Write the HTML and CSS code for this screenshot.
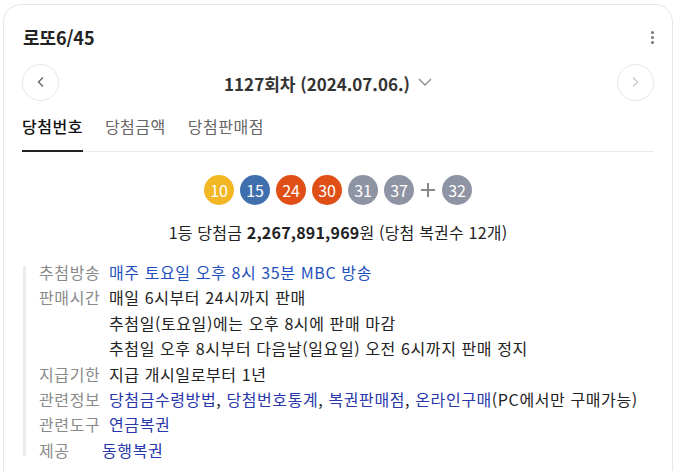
FILE: index.html
```html
<!DOCTYPE html>
<html lang="ko">
<head>
<meta charset="utf-8">
<title>로또6/45</title>
<link rel="stylesheet" href="styles.css">
</head>
<body>
<section class="card">
  <header class="head">
    <h2 class="title">로또6/45</h2>
    <button class="more" aria-label="더보기"><span></span><span></span><span></span></button>
  </header>
  <div class="nav">
    <button class="circle" aria-label="이전회차">
      <svg width="12" height="12" viewBox="0 0 12 12"><path d="M8 1.5 3.5 6 8 10.5" fill="none" stroke="#666" stroke-width="1.4"/></svg>
    </button>
    <div class="round">
      <span>1127회차 (2024.07.06.)</span>
      <svg class="chev" width="14" height="8" viewBox="0 0 14 8"><path d="M1 1 7 7 13 1" fill="none" stroke="#888" stroke-width="1.3"/></svg>
    </div>
    <button class="circle next" aria-label="다음회차">
      <svg width="12" height="12" viewBox="0 0 12 12"><path d="M4 1.5 8.5 6 4 10.5" fill="none" stroke="#ccc" stroke-width="1.4"/></svg>
    </button>
  </div>
  <nav class="tabs">
    <a class="tab on">당첨번호</a>
    <a class="tab">당첨금액</a>
    <a class="tab">당첨판매점</a>
  </nav>
  <div class="balls">
    <span class="ball y">10</span>
    <span class="ball b">15</span>
    <span class="ball r">24</span>
    <span class="ball r">30</span>
    <span class="ball g">31</span>
    <span class="ball g">37</span>
    <svg class="plus" width="16" height="16" viewBox="0 0 16 16"><path d="M8 1v14M1 8h14" stroke="#888" stroke-width="2"/></svg>
    <span class="ball g">32</span>
  </div>
  <p class="prize">1등 당첨금 <strong>2,267,891,969</strong>원 (당첨 복권수 12개)</p>
  <dl class="info">
    <div class="row"><dt>추첨방송</dt><dd class="blue">매주 토요일 오후 8시 35분 MBC 방송</dd></div>
    <div class="row"><dt>판매시간</dt><dd>매일 6시부터 24시까지 판매<br>추첨일(토요일)에는 오후 8시에 판매 마감<br>추첨일 오후 8시부터 다음날(일요일) 오전 6시까지 판매 정지</dd></div>
    <div class="row"><dt>지급기한</dt><dd>지급 개시일로부터 1년</dd></div>
    <div class="row"><dt>관련정보</dt><dd><a class="lnk">당첨금수령방법</a>, <a class="lnk">당첨번호통계</a>, <a class="lnk">복권판매점</a>, <a class="lnk">온라인구매</a>(PC에서만 구매가능)</dd></div>
    <div class="row"><dt>관련도구</dt><dd><a class="lnk">연금복권</a></dd></div>
    <div class="row"><dt class="short">제공</dt><dd><a class="lnk">동행복권</a></dd></div>
  </dl>
</section>
</body>
</html>
```
FILE: styles.css
```css
* { box-sizing: border-box; }
body {
  margin: 0;
  background: #fff;
  font-family: "Noto Sans CJK KR", "Noto Sans", sans-serif;
  color: #222;
  overflow: hidden;
}
.card {
  margin: 4px 6px 0 3px;
  min-height: 520px;
  border: 1px solid #e4e6ea;
  border-radius: 18px;
  padding: 20px 18px 0 18px;
}
.head {
  display: flex;
  align-items: center;
  justify-content: space-between;
  height: 24px;
}
.title {
  margin: 0 0 0 1px;
  font-size: 18px;
  font-weight: 700;
  line-height: 24px;
  letter-spacing: -0.1px;
}
.more {
  border: 0;
  background: none;
  padding: 0;
  width: 10px;
  margin-right: -3px;
  display: flex;
  flex-direction: column;
  align-items: center;
  gap: 2px;
}
.more span {
  width: 3px;
  height: 3px;
  border-radius: 50%;
  background: #777;
}
.nav {
  margin-top: 15px;
  display: flex;
  align-items: center;
  justify-content: space-between;
  height: 36px;
}
.circle {
  width: 37px;
  height: 37px;
  border-radius: 50%;
  border: 1px solid #e6e6e6;
  background: #fff;
  display: flex;
  align-items: center;
  justify-content: center;
  padding: 0;
}
.round {
  display: flex;
  align-items: center;
  gap: 8px;
  font-size: 17px;
  font-weight: 700;
  color: #333;
  margin-right: 20px;
  margin-top: 2px;
}
.chev { margin-top: -2px; }
.tabs {
  display: flex;
  gap: 22px;
  border-bottom: 1px solid #ebebeb;
}
.tab {
  font-size: 16px;
  letter-spacing: 0.5px;
  line-height: 22px;
  padding: 15px 0 13px;
  color: #666;
  border-bottom: 2px solid transparent;
  margin-bottom: -1px;
}
.tab.on {
  color: #111;
  border-bottom-color: #222;
  font-weight: 500;
}
.balls {
  margin-top: 23px;
  display: flex;
  justify-content: center;
  align-items: center;
  gap: 6px;
}
.ball {
  width: 30px;
  height: 30px;
  border-radius: 50%;
  color: #fff;
  font-size: 16px;
  line-height: 30px;
  text-align: center;
  letter-spacing: -0.2px;
}
.ball.y { background: #f2b723; }
.ball.b { background: #3f6fac; }
.ball.r { background: #df4f16; }
.ball.g { background: #8e94a3; }
.plus { margin: 0 0; }
.prize {
  margin: 16px 0 0;
  text-align: center;
  font-size: 16px;
  letter-spacing: 0.2px;
  line-height: 22px;
  color: #222;
}
.prize strong { font-weight: 700; }
.info {
  margin: 23px 0 0 1px;
  border-left: 3px solid #ececec;
  display: flex;
  flex-direction: column;
  font-size: 16px;
  letter-spacing: 0.6px;
  line-height: 25.4px;
}
.row {
  display: flex;
  gap: 9px;
  padding-left: 13px;
}
.row:first-child { margin-top: -6px; }
.row:last-child { margin-bottom: -7px; }
dt {
  color: #8a8a8a;
  width: 61px;
  flex: none;
  white-space: nowrap;
}
dt.short { width: 54px; }
dd { margin: 0; color: #222; white-space: nowrap; }
.blue { color: #1f4fbd; }
.lnk { color: #2838ab; }
```
